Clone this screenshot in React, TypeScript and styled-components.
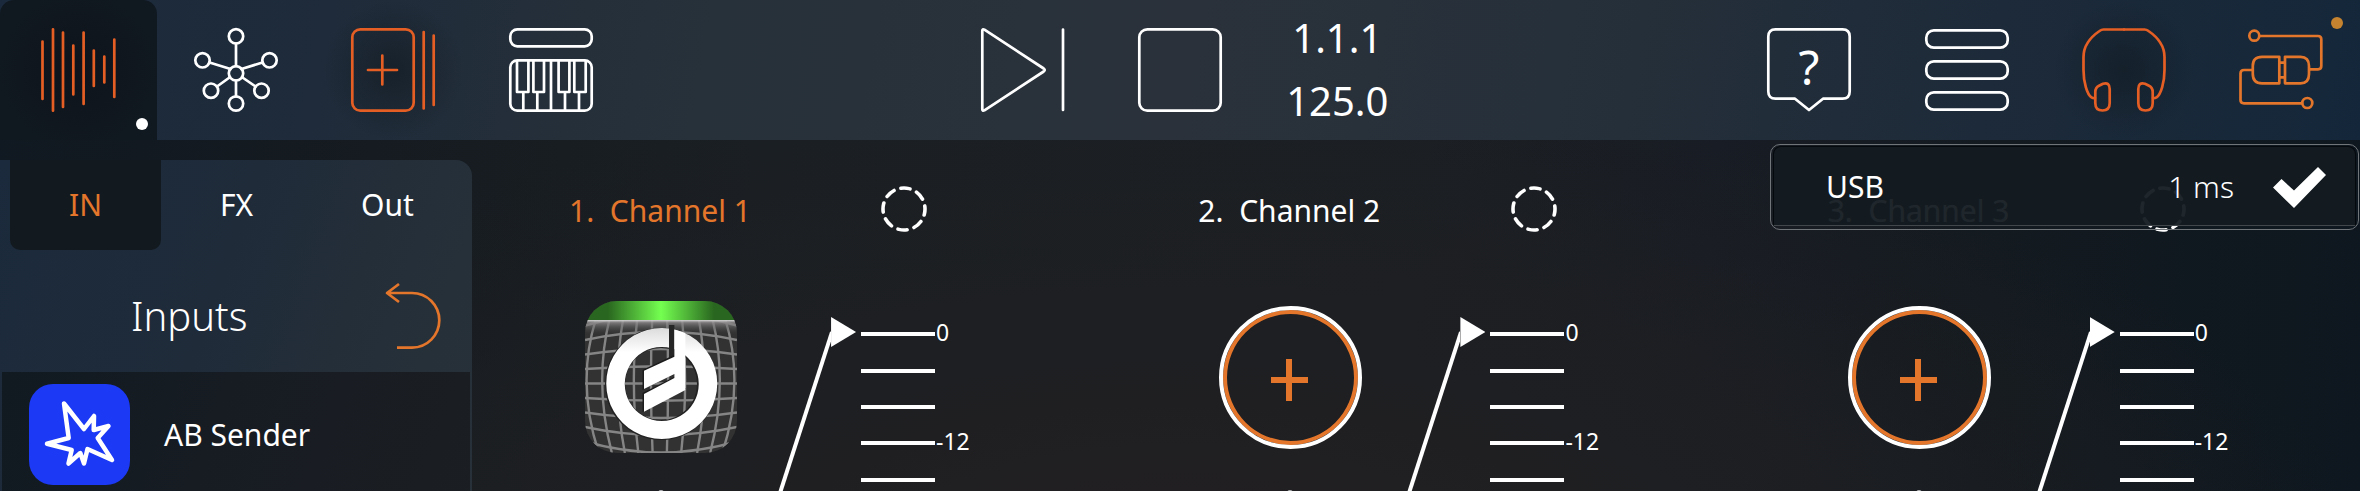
import React, { useState } from 'react';
import styled, { createGlobalStyle } from 'styled-components';

const ORANGE = '#e4762b';
const EMBER = '#e55f24';

const Global = createGlobalStyle`
  * { box-sizing: border-box; }
  html, body, #root { height: 100%; }
  body {
    margin: 0;
    overflow: hidden;
    background: #11181f;
    color: #fff;
    font-family: "Noto Sans", sans-serif;
  }
  button {
    margin: 0;
    padding: 0;
    border: 0;
    background: none;
    color: inherit;
    font: inherit;
    cursor: pointer;
  }
`;

const Page = styled.div`
  height: 100%;
  display: flex;
  flex-direction: column;
  overflow: hidden;
  background:
    radial-gradient(ellipse 50% 100% at 50% 118%, #231f20 0%, #1e1f22 45%, rgba(27, 31, 35, 0) 100%),
    linear-gradient(95deg, #101821 0%, #151b20 16%, #1a1f23 32%, #1b1f23 60%, #181c24 72%, #131a20 84%, #0e171f 100%);
`;

const Toolbar = styled.header`
  position: relative;
  z-index: 1;
  flex: none;
  height: 140px;
  display: grid;
  grid-template-columns: repeat(15, 1fr);
  background: linear-gradient(100deg, #1a2a3c 0%, #1f2b3a 14%, #27313a 30%, #2a313a 50%, #26303a 66%, #1d2a39 84%, #14273a 100%);
`;

const Tool = styled.button<{ $column: number; $active?: boolean; $glow?: boolean; $color?: string }>`
  position: relative;
  grid-column: ${p => p.$column};
  display: grid;
  place-items: center;
  color: ${p => p.$color ?? '#fff'};
  border-radius: ${p => (p.$active ? '14px 14px 0 0' : '0')};
  background: ${p =>
    p.$active
      ? 'radial-gradient(circle, #0f141c 0%, #101820 75%)'
      : p.$glow
        ? 'radial-gradient(circle closest-side, rgba(18, 28, 36, 0.7), rgba(18, 28, 36, 0))'
        : 'none'};
`;

const Icon = styled.svg`
  display: block;
  overflow: visible;
  fill: none;
  stroke: currentColor;
  stroke-width: 2.7;
  stroke-linecap: round;
  stroke-linejoin: round;
`;

const Dot = styled.span<{ $warm?: boolean }>`
  position: absolute;
  right: ${p => (p.$warm ? '17px' : '9px')};
  top: ${p => (p.$warm ? '17px' : '118px')};
  width: 12px;
  height: 12px;
  border-radius: 50%;
  background: ${p => (p.$warm ? '#c5832f' : '#fff')};
`;

const Clock = styled.div`
  grid-column: 9;
  display: flex;
  flex-direction: column;
  align-items: center;
  padding-top: 6px;
  font-size: 40px;
  line-height: 63px;
`;

const Body = styled.main`
  flex: 1;
  min-height: 0;
  display: grid;
  grid-template-columns: 1fr 4fr;
`;

const Browser = styled.aside`
  margin-top: 20px;
  display: flex;
  flex-direction: column;
  border-radius: 0 16px 0 0;
  background: linear-gradient(110deg, #1b2a3c 0%, #1f2b39 40%, #263039 75%, #28313a 100%);
`;

const Tabs = styled.nav`
  height: 90px;
  padding: 0 9px 0 10px;
  display: grid;
  grid-template-columns: repeat(3, 1fr);
`;

const Tab = styled.button<{ $active?: boolean }>`
  border-radius: 0 0 10px 10px;
  font-size: 30px;
  line-height: 48px;
  color: ${p => (p.$active ? ORANGE : '#fff')};
  background: ${p => (p.$active ? '#121a20' : 'none')};
`;

const BrowserHead = styled.div`
  height: 122px;
  padding: 10px 32px 0 131px;
  display: flex;
  align-items: center;
  justify-content: space-between;
  color: ${ORANGE};
`;

const Heading = styled.h2`
  margin: 0;
  font-size: 40px;
  line-height: 60px;
  font-weight: 300;
  color: #fff;
`;

const List = styled.ul`
  flex: 1;
  margin: 0 2px;
  padding: 12px 0 0;
  list-style: none;
  background: linear-gradient(110deg, #111a21 0%, #191d23 60%, #1b1f22 100%);
`;

const Source = styled.button`
  width: 100%;
  padding-left: 27px;
  display: flex;
  align-items: center;
  gap: 34px;
  font-size: 30px;
  line-height: 48px;
`;

const AppBadge = styled.span`
  width: 101px;
  height: 101px;
  border-radius: 24px;
  background: #1c39f5;
`;

const Channels = styled.section`
  display: grid;
  grid-template-columns: repeat(3, 1fr);
`;

const Strip = styled.article`
  min-width: 0;
  padding-top: 47px;
`;

const StripHead = styled.div`
  height: 48px;
  padding: 0 174px 0 97px;
  display: flex;
  align-items: center;
  justify-content: space-between;
`;

const Name = styled.h3<{ $active?: boolean }>`
  margin: 0;
  font-size: 30px;
  line-height: 48px;
  font-weight: 400;
  white-space: pre;
  color: ${p => (p.$active ? ORANGE : '#fff')};
`;

const StripBody = styled.div`
  margin-top: 66px;
  display: grid;
  grid-template-columns: 48% 1fr;
`;

const SlotColumn = styled.div`
  padding-left: 25%;
  display: flex;
  flex-direction: column;
  align-items: center;
`;

const Slot = styled.button`
  width: 152px;
  height: 152px;
  display: grid;
  place-items: center;
`;

const Ring = styled.span`
  width: 143px;
  height: 143px;
  display: grid;
  place-items: center;
  border: 4px solid #fff;
  border-radius: 50%;
  box-shadow: inset 0 0 0 4px ${ORANGE};
  color: ${ORANGE};
`;

const KnobMark = styled.span`
  width: 6px;
  height: 12px;
  margin-top: 37px;
  border-radius: 3px;
  background: #b5b7b9;
`;

const FaderArea = styled.div`
  display: flex;
  align-items: flex-start;
`;

const Fader = styled.input`
  appearance: none;
  writing-mode: vertical-lr;
  direction: rtl;
  width: 25px;
  height: 360px;
  margin: 16px 5px 0 0;
  background: none;

  &::-webkit-slider-thumb {
    appearance: none;
    width: 25px;
    height: 30px;
    background: #fff;
    clip-path: polygon(0 0, 100% 50%, 0 100%);
  }
`;

const Scale = styled.ol`
  height: 182px;
  margin: 15px 0 0;
  padding: 0;
  display: grid;
  grid-auto-rows: 1fr;
  list-style: none;
  font-size: 23px;
  line-height: 30px;
`;

const Mark = styled.li`
  display: flex;
  align-items: center;
  gap: 1px;

  &::before {
    content: '';
    width: 74px;
    height: 4px;
    background: #fff;
  }
`;

const MarkLabel = styled.span`
  padding-bottom: 4px;
`;

const Popup = styled.div`
  position: absolute;
  top: 144px;
  right: 1px;
  width: calc(25% - 1px);
  height: 86px;
  padding: 1px 2px 3px;
  border: 1px solid #70757a;
  border-radius: 10px;
`;

const Device = styled.button`
  width: 100%;
  height: 100%;
  padding: 2px 29px 0 52px;
  display: flex;
  align-items: center;
  border: 1px solid #04090e;
  border-bottom-color: #42474c;
  border-radius: 8px 8px 0 0;
  background: rgba(20, 27, 33, 0.95);
  font-size: 30px;
  line-height: 48px;
`;

const Latency = styled.span`
  margin: 0 39px 0 auto;
  font-weight: 300;
`;

function WaveIcon() {
  return (
    <Icon width="84" height="84">
      <path d="M5.5 13.5V71M16 1.3V82.7M26 4.5V79M36.3 17.5V66.5M46.6 4.5V76M56.8 22.5V58M67.3 28.5V54.5M77.3 11.5V69" />
    </Icon>
  );
}

function HubIcon() {
  const nodes = [[42, 8.3], [8.5, 32.3], [75.5, 32.3], [42, 45.3], [17, 62.7], [67.5, 62.7], [42, 75.5]];
  return (
    <Icon width="84" height="84">
      {nodes.map(([x, y]) => <circle key={`${x}-${y}`} cx={x} cy={y} r="7.2" />)}
      <path d="M42 15.5V38M15.5 34.5L36.5 41M68.5 34.5L47.5 41M35.5 49.5L23 58.5M48.5 49.5L61.5 58.5M42 52.5V68.3" />
    </Icon>
  );
}

function CardsIcon() {
  return (
    <Icon width="84" height="84">
      <rect x="1.3" y="1.3" width="61.4" height="81.4" rx="8" />
      <path d="M31.3 27.5V56.5M17 42H46M72.7 4V80.5M82.7 7.5V77" />
    </Icon>
  );
}

function PianoIcon() {
  return (
    <Icon width="84" height="84">
      <rect x="1.3" y="1.3" width="81.4" height="17" rx="7" />
      <rect x="1.3" y="32.3" width="81.4" height="50.4" rx="7" />
      <path d="M8 33V64H19.4V33M24.4 33V64H35V33M49.6 33V64H60.4V33M65.3 33V64H76.7V33M14.3 65V82M28.3 65V82M42 33V82M56 65V82M70 65V82" />
    </Icon>
  );
}

function PlayIcon() {
  return (
    <Icon width="84" height="84">
      <path d="M1.3 2.8Q1.3 .6 3.4 1.6L62.7 40.5Q64.8 42 62.7 43.5L3.4 82.4Q1.3 83.4 1.3 81.2ZM82 1.5V82" />
    </Icon>
  );
}

function StopIcon() {
  return (
    <Icon width="84" height="84">
      <rect x="1.3" y="1.3" width="81.4" height="81.4" rx="8" />
    </Icon>
  );
}

const HelpMark = styled.text`
  fill: currentColor;
  stroke: none;
  font-size: 48px;
  text-anchor: middle;
`;

function HelpIcon() {
  return (
    <Icon width="84" height="84">
      <path d="M8.5 1.3H75.5Q82.7 1.3 82.7 8.5V63.5Q82.7 70.7 75.5 70.7H56L42 82L28 70.7H8.5Q1.3 70.7 1.3 63.5V8.5Q1.3 1.3 8.5 1.3Z" />
      <HelpMark x="42" y="57">?</HelpMark>
    </Icon>
  );
}

function MenuIcon() {
  return (
    <Icon width="84" height="84">
      {[2.3, 33.3, 64.3].map(y => <rect key={y} x="1.3" y={y} width="81.4" height="17.4" rx="7.5" />)}
    </Icon>
  );
}

function HeadphonesIcon() {
  const pad = 'M13.3 64Q13.3 59.5 17 57.7L21 55.8Q27.7 53.8 27.7 61V75Q27.7 82.5 20.5 82.5Q13.3 82.5 13.3 75Z';
  const band = 'M42 1.5H21.5Q19.5 1.5 17.5 3C8 9.5 1.5 19 1.5 29V42C1.5 54 5 66.5 9.5 69.3Q11 70.2 13 70';
  return (
    <Icon width="84" height="84">
      <path d={pad} />
      <path d={band} />
      <g transform="matrix(-1 0 0 1 84 0)">
        <path d={pad} />
        <path d={band} />
      </g>
    </Icon>
  );
}

function LinkIcon() {
  return (
    <Icon width="84" height="84">
      <circle cx="15.3" cy="7.7" r="5" />
      <circle cx="68.3" cy="75" r="5" />
      <path d="M21 8H79Q82.3 8 82.3 11.3V38Q82.3 41.3 79 41.3H70.5M13.8 42H5Q1.5 42 1.5 45.5V72Q1.5 75.3 5 75.3H63" />
      <path d="M40.3 28.8H23Q13.8 28.8 13.8 38V46Q13.8 55.3 23 55.3H40.3ZM46 28.8H61.5Q70 28.8 70 38V46Q70 55.3 61.5 55.3H46ZM40.3 34.7H46M40.3 49.3H46" />
    </Icon>
  );
}

function UndoIcon() {
  return (
    <Icon width="54" height="66">
      <path strokeLinecap="butt" d="M13 1L1 10L13 19M1 10H26A27.3 27.3 0 0 1 26 64.6H11" />
    </Icon>
  );
}

const StarPath = styled.path`
  stroke: #fff;
  stroke-width: 4.5;
`;

function StarIcon() {
  return (
    <Icon width="101" height="101">
      <StarPath d="M35 19.5L55 45L65 32L64.7 46L79.5 42L68.7 54L83 76L58.5 65L55 79.5L51.3 69L39.5 79.5L42.7 66L18 59.7L39.7 54Z" />
    </Icon>
  );
}

const Art = styled.svg`
  display: block;
  border-radius: 32px;
`;

function SynthArt() {
  const columns = [-74, -58.5, -43, -27, -10, 7, 24, 43, 58.5, 73];
  const rows = [-4, -3, -2, -1, 0, 1, 2, 3, 4];
  return (
    <Art width="152" height="152" viewBox="0 0 152 152" fill="none">
      <defs>
        <linearGradient id="lamp">
          <stop offset="0.15" stopColor="#29661f" />
          <stop offset="0.5" stopColor="#74ff50" />
          <stop offset="0.85" stopColor="#29661f" />
        </linearGradient>
        <linearGradient id="shine" x2="0" y2="1">
          <stop stopColor="#d8d8d8" />
          <stop offset="0.2" stopColor="#8a8787" stopOpacity="0.8" />
          <stop offset="1" stopColor="#444" stopOpacity="0" />
        </linearGradient>
        <linearGradient id="ring" x2="0" y2="1">
          <stop stopColor="#dcdcdc" />
          <stop offset="0.22" stopColor="#fff" />
        </linearGradient>
      </defs>
      <rect width="152" height="152" fill="#323232" />
      <g stroke="#858585" strokeWidth="2.4">
        {columns.map(d => (
          <path key={d} d={`M${76 + d * 0.88} 18Q${76 + d * 1.15} 82 ${76 + d * 0.84} 152`} />
        ))}
        {rows.map(k => (
          <path key={k} d={`M0 ${82.5 + k * 14.5}Q76 ${82.5 + k * 20} 152 ${82.5 + k * 14.5}`} />
        ))}
      </g>
      <rect y="19" width="152" height="14" fill="url(#shine)" />
      <rect width="152" height="19" fill="url(#lamp)" />
      <circle cx="76" cy="83" r="46" stroke="#222" strokeWidth="20" />
      <path d="M76.5 27A55.5 55.5 0 1 0 77 27ZM77 46A37 37 0 1 1 76.5 46Z" fill="url(#ring)" fillRule="evenodd" />
      <path d="M84 24H89.4V57L84 59Z" fill="#262626" />
      <path d="M57.5 69L89 54V73L57.5 89ZM57.5 92L89 76L101 88L57.5 111Z" fill="#1c1c1c" />
      <path d="M89.4 28.5L100.4 32V89L59 110.7V93L89.4 77V73L59 88V69.7L89.4 55.7Z" fill="#fff" />
    </Art>
  );
}

function PlusIcon() {
  return (
    <svg width="38" height="47" viewBox="0 0 38 47" stroke="currentColor" strokeWidth="6">
      <path d="M18 5V47M-1 26H37" />
    </svg>
  );
}

function FaderSlope() {
  return (
    <svg width="57" height="191" stroke="#fff" strokeWidth="4">
      <path d="M58 31L6 192" />
    </svg>
  );
}

function AssignRing() {
  return (
    <svg width="46" height="46" fill="none" stroke="#fff" strokeWidth="3.6" strokeLinecap="round">
      <circle cx="23" cy="23" r="21" pathLength="80" strokeDasharray="5.6 4.4" strokeDashoffset="-5" transform="rotate(14 23 23)" />
    </svg>
  );
}

function CheckIcon() {
  return (
    <svg width="53" height="41" fill="#fff">
      <path d="M0 20.5L8.5 12L21 23.5L45 0L53 8L21 41Z" />
    </svg>
  );
}

const MARKS = ['0', '', '', '-12', ''];

function ChannelStrip({ number, active, loaded }: { number: number; active?: boolean; loaded?: boolean }) {
  const [level, setLevel] = useState(100);
  return (
    <Strip>
      <StripHead>
        <Name $active={active}>{`${number}.  Channel ${number}`}</Name>
        <button aria-label={`Assign channel ${number}`}><AssignRing /></button>
      </StripHead>
      <StripBody>
        <SlotColumn>
          <Slot aria-label={loaded ? 'Open instrument' : 'Add instrument'}>
            {loaded ? <SynthArt /> : <Ring><PlusIcon /></Ring>}
          </Slot>
          <KnobMark />
        </SlotColumn>
        <FaderArea>
          <FaderSlope />
          <Fader
            type="range"
            aria-label={`Channel ${number} level`}
            value={level}
            onChange={e => setLevel(Number(e.target.value))}
          />
          <Scale>
            {MARKS.map((label, i) => (
              <Mark key={i}>{label && <MarkLabel>{label}</MarkLabel>}</Mark>
            ))}
          </Scale>
        </FaderArea>
      </StripBody>
    </Strip>
  );
}

export default function App() {
  return (
    <>
      <Global />
      <Page>
        <Toolbar>
          <Tool $column={1} $active $color={EMBER} aria-label="Mixer"><WaveIcon /><Dot /></Tool>
          <Tool $column={2} aria-label="Routing"><HubIcon /></Tool>
          <Tool $column={3} $glow $color={EMBER} aria-label="Add scene"><CardsIcon /></Tool>
          <Tool $column={4} aria-label="Keyboard"><PianoIcon /></Tool>
          <Tool $column={7} aria-label="Play"><PlayIcon /></Tool>
          <Tool $column={8} aria-label="Stop"><StopIcon /></Tool>
          <Clock><span>1.1.1</span><span>125.0</span></Clock>
          <Tool $column={12} aria-label="Help"><HelpIcon /></Tool>
          <Tool $column={13} aria-label="Menu"><MenuIcon /></Tool>
          <Tool $column={14} $glow $color={EMBER} aria-label="Monitor"><HeadphonesIcon /></Tool>
          <Tool $column={15} $color={ORANGE} aria-label="Connections"><LinkIcon /><Dot $warm /></Tool>
          <Popup>
            <Device>
              <span>USB</span>
              <Latency>1 ms</Latency>
              <CheckIcon />
            </Device>
          </Popup>
        </Toolbar>
        <Body>
          <Browser>
            <Tabs>
              <Tab $active>IN</Tab>
              <Tab>FX</Tab>
              <Tab>Out</Tab>
            </Tabs>
            <BrowserHead>
              <Heading>Inputs</Heading>
              <button aria-label="Back"><UndoIcon /></button>
            </BrowserHead>
            <List>
              <li>
                <Source>
                  <AppBadge><StarIcon /></AppBadge>
                  AB Sender
                </Source>
              </li>
            </List>
          </Browser>
          <Channels>
            <ChannelStrip number={1} active loaded />
            <ChannelStrip number={2} />
            <ChannelStrip number={3} />
          </Channels>
        </Body>
      </Page>
    </>
  );
}
